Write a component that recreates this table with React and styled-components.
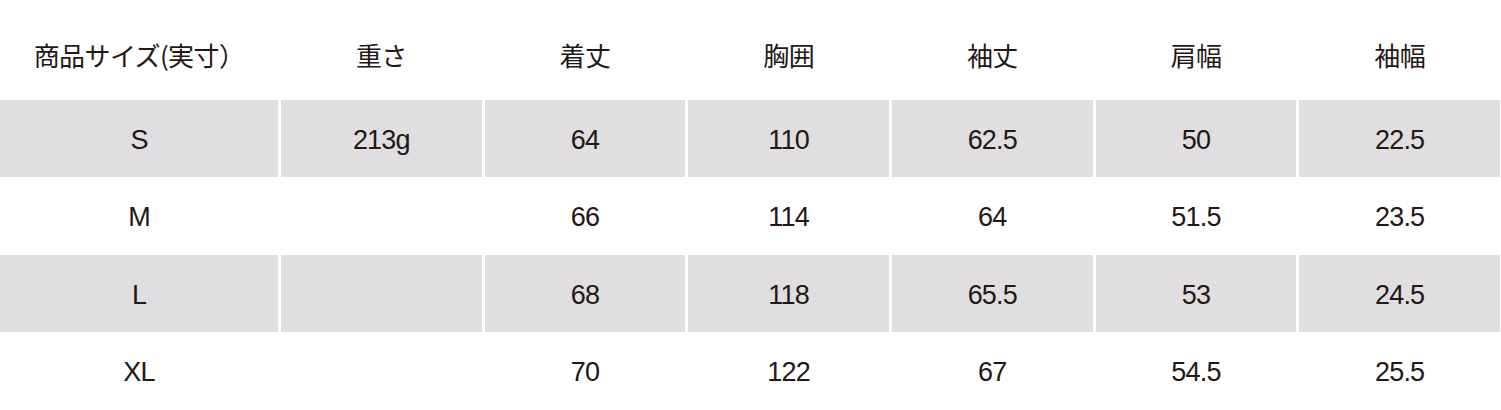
import React from "react";
import styled, { createGlobalStyle } from "styled-components";

const Global = createGlobalStyle`
  html, body { margin: 0; padding: 0; background: #ffffff; }
  body { font-family: "Liberation Sans", "Noto Sans CJK JP", sans-serif; }
`;

const Table = styled.div`
  width: 1500px;
  display: grid;
  grid-template-columns: 278px repeat(6, 1fr);
  column-gap: 3px;
  color: #231815;
`;

const HeadCell = styled.div`
  height: 100px;
  display: flex;
  align-items: center;
  justify-content: center;
  padding-top: 9px;
  box-sizing: border-box;
  font-family: "Noto Sans CJK JP", sans-serif;
  font-size: 26px;
  letter-spacing: -0.6px;
`;

const Cell = styled.div`
  height: ${(p) => (p.$shaded ? 77 : 78)}px;
  display: flex;
  align-items: center;
  justify-content: center;
  padding-top: 3px;
  box-sizing: border-box;
  background: ${(p) => (p.$shaded ? "#e0dee0" : "#ffffff")};
  font-family: "Liberation Sans", sans-serif;
  font-size: 27px;
  letter-spacing: -0.8px;
`;

const headers = ["商品サイズ(実寸）", "重さ", "着丈", "胸囲", "袖丈", "肩幅", "袖幅"];
const rows = [
  ["S", "213g", "64", "110", "62.5", "50", "22.5"],
  ["M", "", "66", "114", "64", "51.5", "23.5"],
  ["L", "", "68", "118", "65.5", "53", "24.5"],
  ["XL", "", "70", "122", "67", "54.5", "25.5"],
];

export default function App() {
  return (
    <>
      <Global />
      <Table>
        {headers.map((h) => (
          <HeadCell key={h}>{h}</HeadCell>
        ))}
        {rows.map((r, i) =>
          r.map((v, j) => (
            <Cell key={`${i}-${j}`} $shaded={i % 2 === 0}>
              {v}
            </Cell>
          ))
        )}
      </Table>
    </>
  );
}
